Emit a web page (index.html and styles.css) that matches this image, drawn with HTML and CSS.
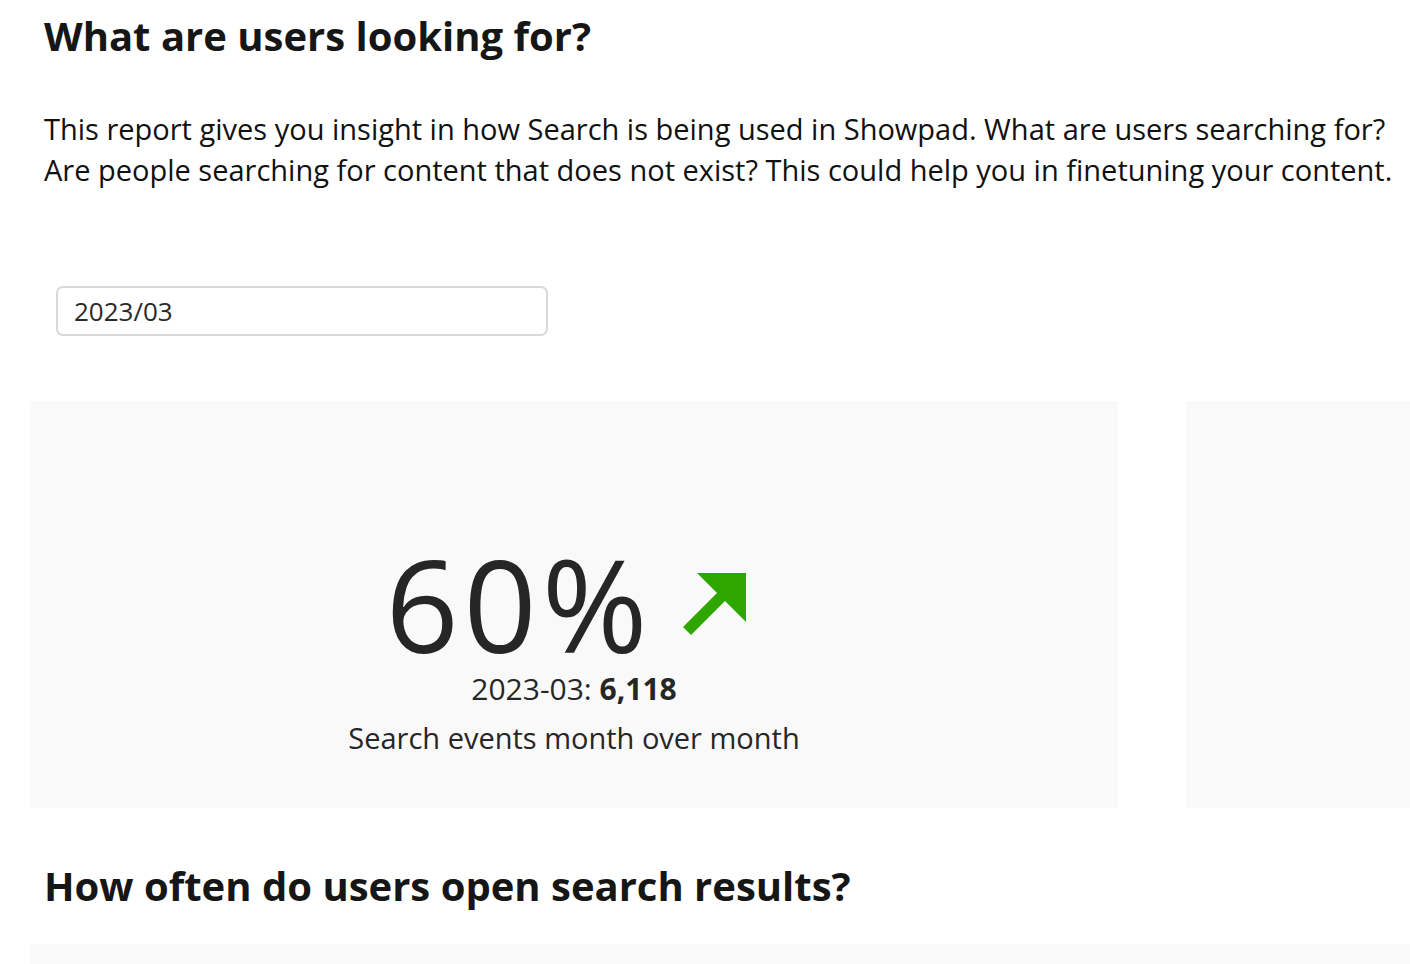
FILE: index.html
```html
<!DOCTYPE html>
<html>
<head>
<meta charset="utf-8">
<link rel="stylesheet" href="styles.css">
</head>
<body>
<div class="page">
  <h1 class="title">What are users looking for?</h1>
  <p class="intro">This report gives you insight in how Search is being used in Showpad. What are users searching for?<br>Are people searching for content that does not exist? This could help you in finetuning your content.</p>
  <div class="filter">
    <div class="select">2023/03</div>
  </div>
  <div class="cards">
    <div class="card kpi">
      <div class="kpi-main">
        <div class="kpi-value">60%</div>
        <svg class="kpi-arrow" viewBox="0 0 64 64" width="64" height="64">
          <polygon points="14,1 63,1 63,50" fill="#2ea600"/>
          <polygon points="0,55 40,15 48,23 8,63" fill="#2ea600"/>
        </svg>
      </div>
      <div class="kpi-compare">2023-03: <b>6,118</b></div>
      <div class="kpi-label">Search events month over month</div>
    </div>
    <div class="card side"></div>
  </div>
  <h2 class="title title2">How often do users open search results?</h2>
  <div class="card bottom"></div>
</div>
</body>
</html>
```
FILE: styles.css
```css
html, body {
  margin: 0;
  padding: 0;
  background: #ffffff;
}
body {
  font-family: "Open Sans", "Noto Sans", sans-serif;
  color: #161616;
  overflow: hidden;
}
.page {
  padding: 0 0 0 30px;
}
.title {
  margin: 0;
  padding: 10px 0 0 14px;
  font-size: 40px;
  line-height: 52px;
  font-weight: 700;
  color: #161616;
}
.intro {
  margin: 0;
  padding: 46px 0 0 14px;
  font-size: 29px;
  line-height: 41px;
  color: #111;
}
.filter {
  padding: 96px 0 0 26px;
}
.select {
  box-sizing: border-box;
  width: 492px;
  height: 50px;
  border: 2px solid #d9d9d9;
  border-radius: 7px;
  padding: 0 0 0 16px;
  font-size: 26px;
  line-height: 46px;
  color: #2a2a2a;
}
.cards {
  display: flex;
  gap: 68px;
  margin-top: 65px;
}
.card {
  background: #f9f9f9;
}
.kpi {
  width: 1088px;
  height: 407px;
  display: flex;
  flex-direction: column;
  align-items: center;
  justify-content: flex-start;
  color: #262626;
}
.side {
  flex: 1;
  height: 407px;
}
.kpi-main {
  display: flex;
  align-items: center;
  margin-top: 148px;
  height: 110px;
  padding-right: 16px;
}
.kpi-value {
  font-size: 128px;
  line-height: 110px;
  height: 110px;
  font-weight: 400;
  letter-spacing: 5px;
  color: #262626;
}
.kpi-arrow {
  margin-left: 30px;
  margin-top: 0;
}
.kpi-compare {
  font-size: 30px;
  line-height: 40px;
  margin-top: 10px;
}
.kpi-compare b {
  font-weight: 700;
}
.kpi-label {
  font-size: 29px;
  line-height: 40px;
  margin-top: 9px;
}
.title2 {
  padding-top: 52px;
}
.bottom {
  margin-top: 32px;
  height: 60px;
}
```
